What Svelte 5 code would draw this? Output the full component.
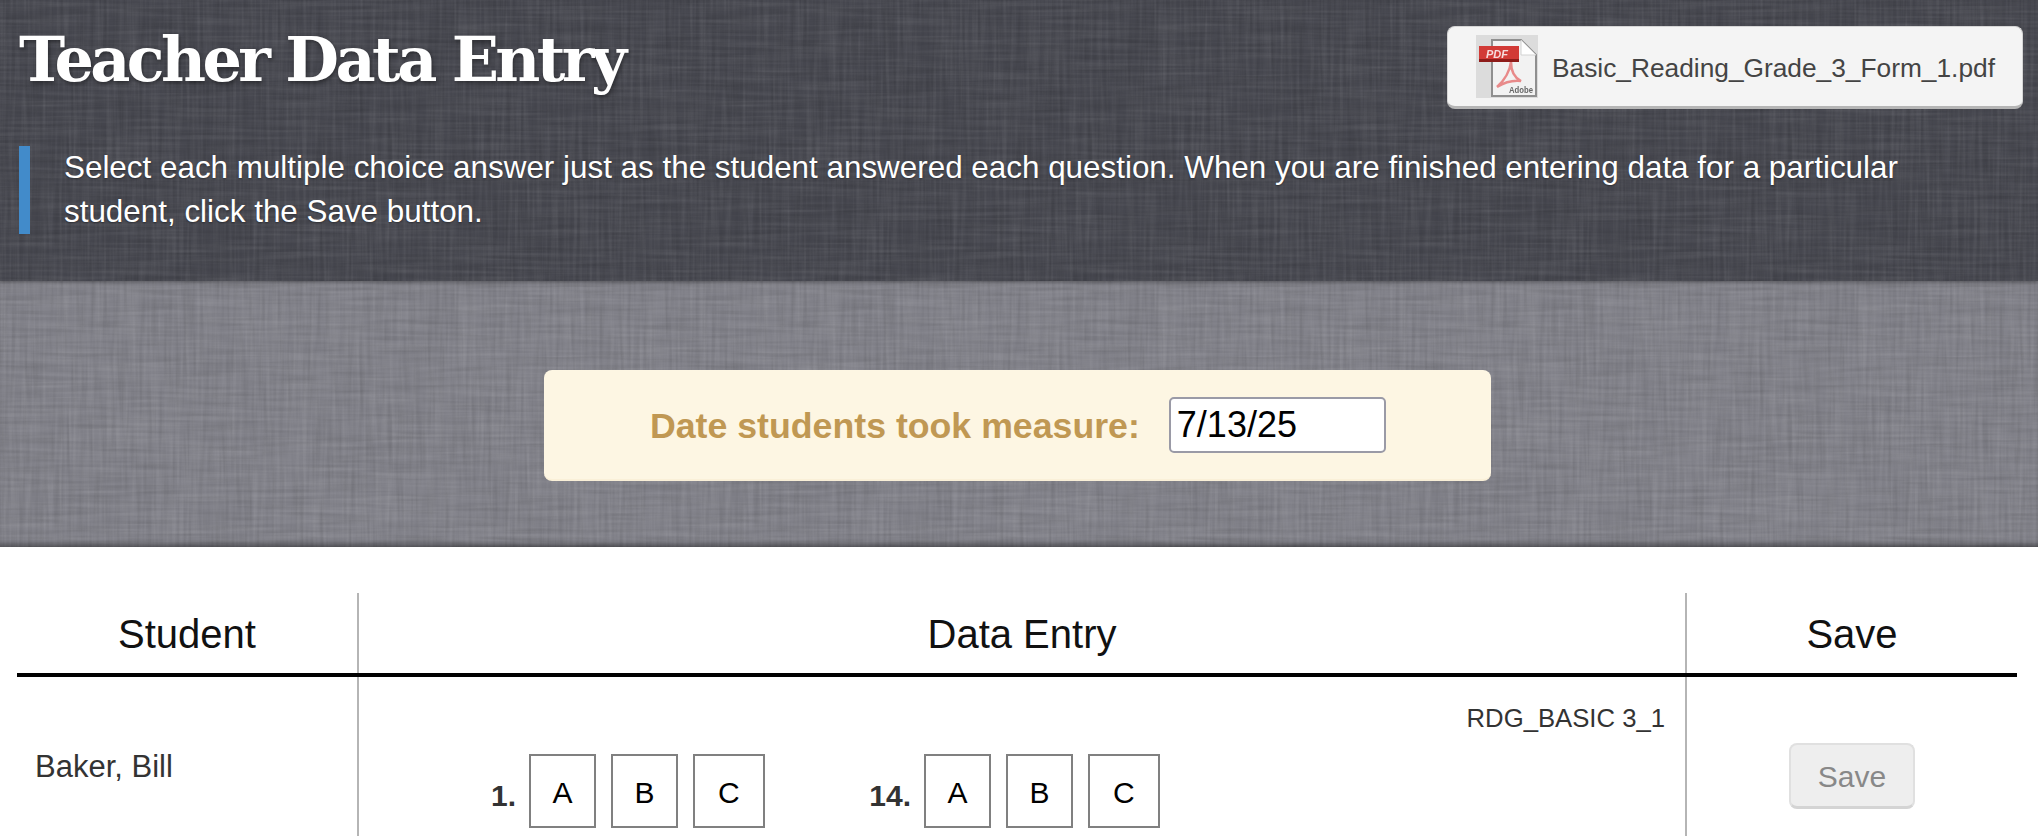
<script>
  let date = '7/13/25';

  const columns = [
    { number: '1.', choices: ['A', 'B', 'C'] },
    { number: '14.', choices: ['A', 'B', 'C'] }
  ];
</script>

<div class="page">
  <header class="top linen">
    <div class="title-row">
      <h1>Teacher Data Entry</h1>
      <a class="pdf-link" href="#pdf">
        <svg class="pdf-icon" viewBox="0 0 62 63" width="62" height="63">
          <rect width="62" height="63" fill="#dcdcdc" />
          <path d="M16 5h29l15 15v41H16z" fill="#f2f2f2" stroke="#8f8f8f" stroke-width="2" />
          <path d="M45 5l15 15H45z" fill="#fff" stroke="#d2d2d2" />
          <path d="M35 27c-1 8-6 18-14 25c8-5 15-7 24-6c-6-3-10-10-10-19" fill="none" stroke="#e88a8a" stroke-width="2.5" />
          <rect x="3" y="11" width="40" height="15" fill="#d23a36" />
          <rect x="3" y="24" width="40" height="3" fill="#8e1c1a" />
          <text x="10" y="22.5" class="pdf-mark">PDF</text>
          <text x="33" y="58" class="adobe-mark" textLength="24" lengthAdjust="spacingAndGlyphs">Adobe</text>
        </svg>
        <span>Basic_Reading_Grade_3_Form_1.pdf</span>
      </a>
    </div>
    <p class="intro">
      Select each multiple choice answer just as the student answered each question. When you are finished entering data for a particular<br />student, click the Save button.
    </p>
  </header>

  <section class="measure linen">
    <div class="date-card">
      <label for="taken">Date students took measure:</label>
      <input id="taken" bind:value={date} />
    </div>
  </section>

  <table>
    <colgroup>
      <col class="col-student" />
      <col />
      <col class="col-save" />
    </colgroup>
    <thead>
      <tr>
        <th>Student</th>
        <th>Data Entry</th>
        <th>Save</th>
      </tr>
    </thead>
    <tbody>
      <tr>
        <td class="student">Baker, Bill</td>
        <td class="entry">
          <div class="form-code">RDG_BASIC 3_1</div>
          <div class="questions">
            {#each columns as q}
              <div class="question">
                <span class="number">{q.number}</span>
                {#each q.choices as c}
                  <button class="choice">{c}</button>
                {/each}
              </div>
            {/each}
          </div>
        </td>
        <td class="save-cell">
          <button class="save" disabled>Save</button>
        </td>
      </tr>
    </tbody>
  </table>
</div>

<style>
  :global(body) {
    margin: 0;
    background: #fff;
    font-family: "Liberation Sans", Arial, sans-serif;
    overflow: hidden;
  }
  .page {
    height: 836px;
    overflow: hidden;
  }
  /* woven threads: stretched noise one way, then the other */
  .linen {
    background-image: url("data:image/svg+xml,%3Csvg xmlns='http://www.w3.org/2000/svg' width='700' height='700'%3E%3Cfilter id='h' x='0' y='0' width='100%25' height='100%25'%3E%3CfeTurbulence type='fractalNoise' baseFrequency='0.012 0.3' numOctaves='2' seed='3' stitchTiles='stitch'/%3E%3CfeColorMatrix values='0 0 0 0 1 0 0 0 0 1 0 0 0 0 1 0.14 0 0 0 -0.056'/%3E%3C/filter%3E%3Cfilter id='v' x='0' y='0' width='100%25' height='100%25'%3E%3CfeTurbulence type='fractalNoise' baseFrequency='0.3 0.012' numOctaves='2' seed='8' stitchTiles='stitch'/%3E%3CfeColorMatrix values='0 0 0 0 1 0 0 0 0 1 0 0 0 0 1 0.14 0 0 0 -0.056'/%3E%3C/filter%3E%3Cfilter id='d' x='0' y='0' width='100%25' height='100%25'%3E%3CfeTurbulence type='fractalNoise' baseFrequency='0.25 0.015' numOctaves='2' seed='14' stitchTiles='stitch'/%3E%3CfeColorMatrix values='0 0 0 0 0 0 0 0 0 0 0 0 0 0 0 0.16 0 0 0 -0.062'/%3E%3C/filter%3E%3Cfilter id='e' x='0' y='0' width='100%25' height='100%25'%3E%3CfeTurbulence type='fractalNoise' baseFrequency='0.015 0.25' numOctaves='2' seed='21' stitchTiles='stitch'/%3E%3CfeColorMatrix values='0 0 0 0 0 0 0 0 0 0 0 0 0 0 0 0.16 0 0 0 -0.062'/%3E%3C/filter%3E%3Crect width='700' height='700' filter='url(%23h)'/%3E%3Crect width='700' height='700' filter='url(%23v)'/%3E%3Crect width='700' height='700' filter='url(%23d)'/%3E%3Crect width='700' height='700' filter='url(%23e)'/%3E%3C/svg%3E");
  }
  .top {
    background-color: #46474f;
    height: 281px;
    box-sizing: border-box;
    padding: 0 15px 0 19px;
    position: relative;
    z-index: 1;
    box-shadow: 0 1px 4px rgba(0,0,0,0.35);
  }
  .title-row {
    display: flex;
    justify-content: space-between;
    align-items: flex-start;
  }
  h1 {
    margin: 24px 0 0;
    font-family: "DejaVu Serif", serif;
    font-size: 62px;
    line-height: 72px;
    font-weight: 700;
    letter-spacing: -3.6px;
    color: #fff;
    text-shadow: 1px 2px 4px rgba(0,0,0,0.45);
  }
  .pdf-link {
    margin-top: 26px;
    display: flex;
    align-items: center;
    box-sizing: border-box;
    width: 576px;
    height: 83px;
    padding: 0 0 0 28px;
    background: #f4f4f4;
    border: 1px solid #d5d5d5;
    border-bottom: 3px solid #b5b5b5;
    border-radius: 8px;
    font-size: 26.3px;
    color: #444;
    text-decoration: none;
  }
  .pdf-link span {
    margin-left: 14px;
    padding-top: 4px;
  }
  .pdf-icon {
    flex: none;
    filter: blur(0.4px);
  }
  .pdf-mark {
    font-size: 11px;
    font-weight: 700;
    font-style: italic;
    fill: #f6dcdc;
  }
  .adobe-mark {
    font-size: 9.5px;
    font-weight: 700;
    fill: #666;
  }
  .intro {
    margin: 37px 0 0;
    box-sizing: border-box;
    width: 1900px;
    height: 88px;
    border-left: 11px solid #428bca;
    padding-left: 34px;
    font-size: 31.4px;
    line-height: 44px;
    color: #fff;
    text-shadow: 0 1px 2px rgba(0,0,0,0.4);
  }
  .measure {
    background-color: #82828a;
    height: 266px;
    box-sizing: border-box;
    padding-top: 89px;
    box-shadow: inset 0 -6px 6px -4px rgba(0,0,0,0.5);
  }
  .date-card {
    box-sizing: border-box;
    width: 947px;
    height: 111px;
    margin-left: 544px;
    background: #fdf6e3;
    border-bottom: 2px solid #faf0d8;
    border-radius: 8px;
    display: flex;
    align-items: center;
    padding-left: 106px;
    gap: 29px;
  }
  .date-card label {
    padding-top: 4px;
    font-size: 35.7px;
    font-weight: 700;
    color: #c09853;
  }
  .date-card input {
    box-sizing: border-box;
    width: 217px;
    height: 56px;
    padding: 0 6px;
    border: 2px solid #9a9aa6;
    border-radius: 5px;
    background: #fff;
    font-family: inherit;
    font-size: 36px;
    color: #000;
  }
  table {
    margin: 46px 0 0 17px;
    width: 2000px;
    border-collapse: collapse;
    table-layout: fixed;
  }
  .col-student {
    width: 341px;
  }
  .col-save {
    width: 331px;
  }
  th {
    height: 78px;
    padding: 2px 0 0;
    border-bottom: 4px solid #000;
    font-size: 40px;
    font-weight: 400;
    color: #111;
  }
  th + th, td + td {
    border-left: 2px solid #b5b5b5;
  }
  td {
    height: 200px;
    padding: 0;
    vertical-align: top;
    color: #333;
  }
  .student {
    padding: 72px 0 0 18px;
    font-size: 31px;
    line-height: 36px;
  }
  .form-code {
    margin: 25px 20px 0 0;
    text-align: right;
    font-size: 25.7px;
    line-height: 32px;
  }
  .questions {
    display: flex;
    margin: 20px 0 0 121px;
  }
  .question {
    display: flex;
    width: 395px;
    gap: 15px;
    align-items: flex-start;
  }
  .number {
    width: 36px;
    margin-right: -2px;
    padding-top: 18px;
    font-size: 30px;
    font-weight: 700;
    line-height: 48px;
    white-space: nowrap;
    display: flex;
    justify-content: flex-end;
  }
  .choice {
    box-sizing: border-box;
    height: 74px;
    padding: 4px 21.5px 0;
    border: 2px solid #808080;
    background: #fff;
    font-family: inherit;
    font-size: 30px;
    color: #000;
  }
  .choice:last-child {
    padding: 4px 23px 0;
  }
  .save-cell {
    text-align: center;
  }
  .save {
    margin-top: 66px;
    width: 126px;
    height: 66px;
    box-sizing: border-box;
    padding: 3px 0 0;
    background: #eee;
    border: 2px solid #e0e0e0;
    border-bottom: 3px solid #d4d4d4;
    border-radius: 8px;
    font-family: inherit;
    font-size: 30px;
    color: #888;
  }
</style>
